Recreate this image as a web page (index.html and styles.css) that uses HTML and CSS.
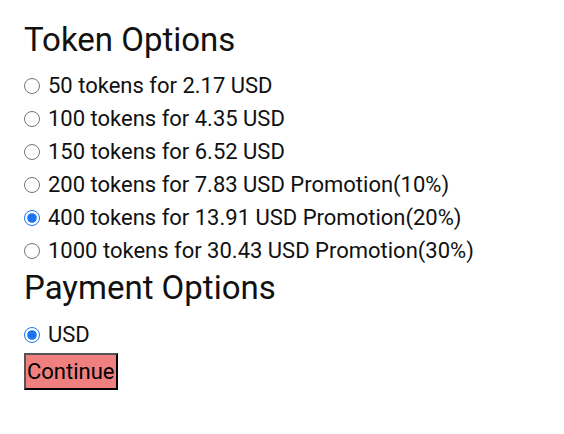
FILE: index.html
```html
<!DOCTYPE html>
<html>
<head>
<meta charset="utf-8">
<link rel="stylesheet" href="styles.css">
</head>
<body>
<div class="page">
  <h2 class="title">Token Options</h2>
  <form class="options">
    <label class="row"><input type="radio" name="tok" class="radio"> 50 tokens for 2.17 USD</label>
    <label class="row"><input type="radio" name="tok" class="radio"> 100 tokens for 4.35 USD</label>
    <label class="row"><input type="radio" name="tok" class="radio"> 150 tokens for 6.52 USD</label>
    <label class="row"><input type="radio" name="tok" class="radio"> 200 tokens for 7.83 USD Promotion(10%)</label>
    <label class="row"><input type="radio" name="tok" class="radio" checked> 400 tokens for 13.91 USD Promotion(20%)</label>
    <label class="row"><input type="radio" name="tok" class="radio"> 1000 tokens for 30.43 USD Promotion(30%)</label>
  </form>
  <h2 class="title">Payment Options</h2>
  <form class="options pay">
    <label class="row"><input type="radio" name="pay" class="radio" checked> USD</label>
  </form>
  <button class="continue" type="button">Continue</button>
</div>
</body>
</html>
```
FILE: styles.css
```css
html, body {
  margin: 0;
  padding: 0;
  background: #fff;
}
.page {
  padding: 19px 24px;
  font-family: Roboto, "Liberation Sans", sans-serif;
  color: #111;
}
.title {
  font-size: 33px;
  font-weight: 400;
  margin: 0;
  padding-top: 3px;
  line-height: 36px;
}
.options {
  display: flex;
  flex-direction: column;
  margin: 11px 0 0;
}
.pay {
  margin-top: 12px;
}
.row {
  display: flex;
  align-items: center;
  height: 33px;
  font-size: 22px;
  gap: 8px;
}
.radio {
  width: 16px;
  height: 16px;
  margin: 0;
  accent-color: #1a73f0;
}
.continue {
  display: block;
  margin-top: 2px;
  font-family: Roboto, "Liberation Sans", sans-serif;
  font-size: 22px;
  background: #f08080;
  color: #000;
  border: 2px outset #555;
  padding: 0 1px;
  height: 37px;
}
```
